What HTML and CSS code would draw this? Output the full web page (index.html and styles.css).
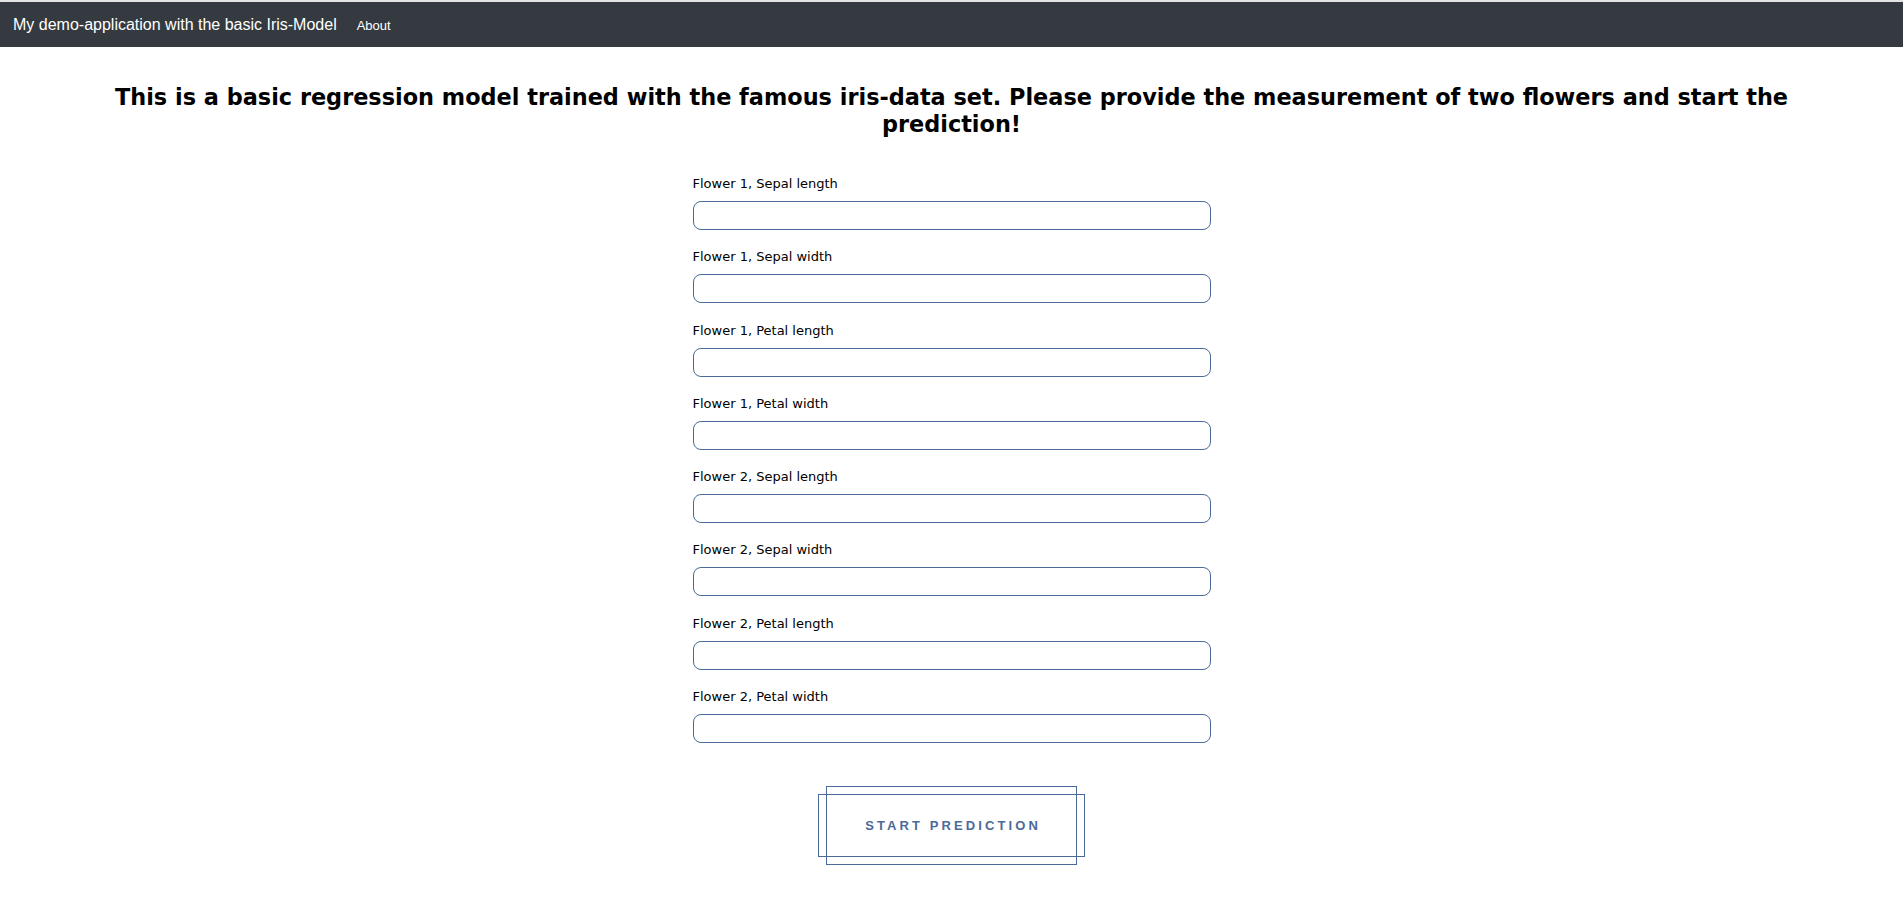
FILE: index.html
```html
<!DOCTYPE html>
<html lang="en">
<head>
<meta charset="utf-8">
<title>Iris demo</title>
<link rel="stylesheet" href="styles.css">
</head>
<body>
<nav class="navbar">
  <span class="brand">My demo-application with the basic Iris-Model</span>
  <a class="nav-link" href="#">About</a>
</nav>
<main class="content">
  <h1 class="title">This is a basic regression model trained with the famous iris-data set. Please provide the measurement of two flowers and start the prediction!</h1>
  <form class="form">
    <div class="field"><label class="label">Flower 1, Sepal length</label><input class="input" type="text"></div>
    <div class="field"><label class="label">Flower 1, Sepal width</label><input class="input" type="text"></div>
    <div class="field"><label class="label">Flower 1, Petal length</label><input class="input" type="text"></div>
    <div class="field"><label class="label">Flower 1, Petal width</label><input class="input" type="text"></div>
    <div class="field"><label class="label">Flower 2, Sepal length</label><input class="input" type="text"></div>
    <div class="field"><label class="label">Flower 2, Sepal width</label><input class="input" type="text"></div>
    <div class="field"><label class="label">Flower 2, Petal length</label><input class="input" type="text"></div>
    <div class="field"><label class="label">Flower 2, Petal width</label><input class="input" type="text"></div>
    <div class="actions">
      <div class="predict-frame"><button class="predict" type="button">START PREDICTION</button></div>
    </div>
  </form>
</main>
</body>
</html>
```

FILE: styles.css
```css
html, body {
  margin: 0;
  padding: 0;
  background: #ffffff;
}
body {
  border-top: 2px solid #e3e3e3;
  font-family: "DejaVu Sans", sans-serif;
  color: #000;
}
.navbar {
  height: 45px;
  background: #343a40;
  display: flex;
  align-items: center;
  padding: 0 13px;
  gap: 20px;
  font-family: "Liberation Sans", Arial, sans-serif;
}
.brand {
  color: #ffffff;
  font-size: 16px;
}
.nav-link {
  color: #ffffff;
  font-size: 13px;
  text-decoration: none;
  padding-top: 2px;
}
.content {
  display: flex;
  flex-direction: column;
  align-items: center;
  padding-bottom: 30px;
}
.title {
  margin: 37px 0 0;
  padding: 0 100px;
  font-size: 22.4px;
  line-height: 27px;
  font-weight: bold;
  text-align: center;
}
.form {
  width: 518px;
  margin-top: 37px;
  display: flex;
  flex-direction: column;
}
.field {
  display: flex;
  flex-direction: column;
  margin-bottom: 18.3px;
}
.label {
  font-size: 13px;
  line-height: 16px;
  padding-top: 1px;
  margin-bottom: 9px;
}
.input {
  box-sizing: border-box;
  height: 29px;
  width: 518px;
  border: 1px solid #4b6a99;
  border-radius: 8px;
  margin: 0;
  padding: 0 10px;
  background: #fff;
}
.actions {
  display: flex;
  justify-content: center;
  padding-top: 33px;
}
.predict-frame {
  position: relative;
  width: 251px;
  height: 63px;
}
.predict-frame::before,
.predict-frame::after {
  content: "";
  position: absolute;
  border: 1px solid #4b6a99;
  pointer-events: none;
}
.predict-frame::before {
  left: 0;
  right: 0;
  top: -8px;
  bottom: -8px;
}
.predict-frame::after {
  left: -8px;
  right: -8px;
  top: 0;
  bottom: 0;
}
.predict {
  width: 100%;
  height: 100%;
  border: none;
  background: transparent;
  color: #4b6a99;
  font-family: "Liberation Sans", Arial, sans-serif;
  font-size: 13px;
  font-weight: bold;
  letter-spacing: 3.1px;
  padding: 0 0 0 3px;
  cursor: pointer;
}
```
